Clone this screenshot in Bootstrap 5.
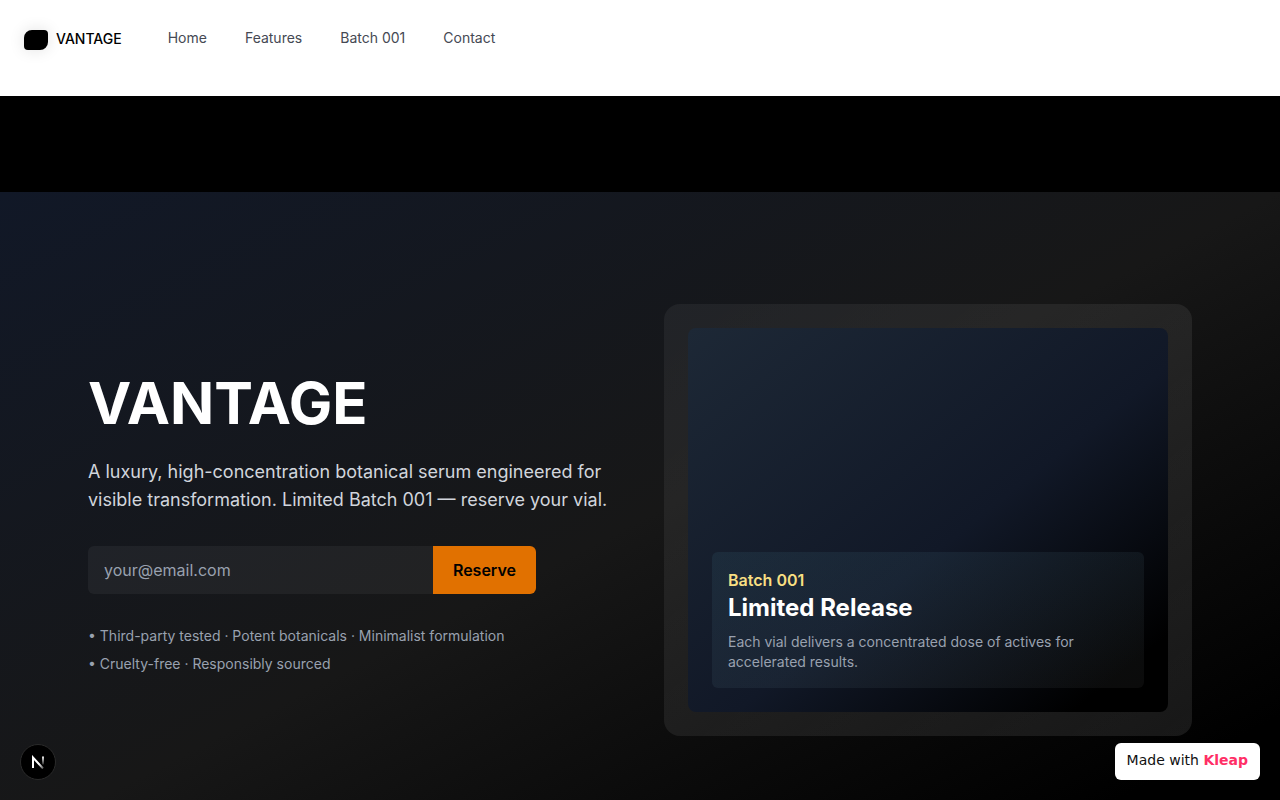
<!DOCTYPE html>
<html lang="en">
<head>
<meta charset="utf-8">
<meta name="viewport" content="width=device-width, initial-scale=1">
<title>VANTAGE</title>
<link href="https://cdn.jsdelivr.net/npm/bootstrap@5.3.0/dist/css/bootstrap.min.css" rel="stylesheet">
<style>
  body { font-family: Inter, "Liberation Sans", sans-serif; background: #000; color: #fff; }
  .site-nav { min-height: 96px; padding: 16px 24px; }
  .site-brand { font-size: 14px; line-height: 20px; font-weight: 500; color: #000; margin-right: 46px; padding-top: 13px; }
  .brand-mark { width: 24px; height: 20px; margin-top: 1px; background: #000; border-radius: 8px 4px 8px 4px; box-shadow: 0 0 16px rgba(0,0,0,.12); }
  .site-links { gap: 38px; padding-top: 12px; }
  .site-links a { font-size: 14px; line-height: 20px; color: #454953; }
  .hero { margin-top: 96px; padding: 112px 24px; background: linear-gradient(to bottom right, #111827, #171717 50%, #000 90%); }
  .hero-inner { max-width: 1104px; }
  .hero-grid { display: grid; grid-template-columns: 1fr 1fr; gap: 48px; align-items: center; }
  .hero-copy { padding-top: 6px; }
  .hero-title { font-size: 58px; line-height: 62px; font-weight: 700; margin-bottom: 24px; }
  .hero-lead { font-size: 18px; line-height: 28px; color: #d1d5dc; margin-bottom: 32px; }
  .reserve { max-width: 448px; margin-bottom: 32px; }
  .reserve .form-control, .reserve .btn { height: 48px; border: 0; border-radius: 6px; font-size: 16px; }
  .reserve .form-control { background: rgba(255,255,255,.05); color: #fff; padding: 0 16px; }
  .reserve .form-control::placeholder { color: #99a1af; opacity: 1; }
  .reserve .btn { background: #e17100; color: #000; font-weight: 600; padding: 0 20px; }
  .hero-points { font-size: 14px; line-height: 20px; color: #99a1af; gap: 8px; }
  .frame { padding: 24px; border-radius: 16px; background: linear-gradient(to bottom right, rgba(255,255,255,.05), rgba(255,255,255,.09)); }
  .vial { min-height: 384px; padding: 24px; border-radius: 8px; background: linear-gradient(to bottom right, #1d2836, #111827 55%, #000 90%); }
  .glass { padding: 16px; border-radius: 6px; background: linear-gradient(to bottom right, rgba(60,110,130,.16), rgba(255,255,255,.045)); }
  .glass-kicker { font-size: 16px; line-height: 24px; font-weight: 600; color: #f8df82; }
  .glass-title { font-size: 24px; line-height: 32px; font-weight: 700; margin-bottom: 8px; }
  .glass-text { font-size: 14px; line-height: 20px; color: #99a1af; }
  .dev-button { left: 20px; bottom: 20px; width: 36px; height: 36px; background: #000; border: 1px solid #2b2b2b; }
  .made-with { right: 20px; bottom: 20px; padding: 7px 12px 9px; border-radius: 6px; background: #fff; color: #111; font: 14px/21px "DejaVu Sans", sans-serif; }
  .made-with strong { color: #ff2f66; }
  @media (max-width: 800px) {
    .hero-grid { grid-template-columns: 1fr; }
    .site-nav { flex-wrap: wrap; }
  }
</style>
</head>
<body>
<header>
  <nav class="site-nav bg-white d-flex align-items-start" aria-label="Main">
    <a class="site-brand d-flex gap-2 text-decoration-none" href="#"><span class="brand-mark"></span>VANTAGE</a>
    <div class="site-links d-flex flex-wrap">
      <a class="text-decoration-none" href="#">Home</a>
      <a class="text-decoration-none" href="#features">Features</a>
      <a class="text-decoration-none" href="#batch">Batch 001</a>
      <a class="text-decoration-none" href="#contact">Contact</a>
    </div>
  </nav>
</header>
<main>
  <section class="hero">
    <div class="hero-inner hero-grid mx-auto">
      <div class="hero-copy">
        <h1 class="hero-title">VANTAGE</h1>
        <p class="hero-lead">A luxury, high-concentration botanical serum engineered for visible transformation. Limited Batch 001 — reserve your vial.</p>
        <form class="reserve input-group">
          <input class="form-control" type="email" placeholder="your@email.com" aria-label="Email address">
          <button class="btn" type="button">Reserve</button>
        </form>
        <ul class="hero-points list-unstyled d-flex flex-column mb-0">
          <li>• Third-party tested · Potent botanicals · Minimalist formulation</li>
          <li>• Cruelty-free · Responsibly sourced</li>
        </ul>
      </div>
      <div class="frame" id="batch">
        <div class="vial d-flex flex-column justify-content-end">
          <div class="glass">
            <div class="glass-kicker">Batch 001</div>
            <h2 class="glass-title">Limited Release</h2>
            <p class="glass-text mb-0">Each vial delivers a concentrated dose of actives for accelerated results.</p>
          </div>
        </div>
      </div>
    </div>
  </section>
</main>
<button class="dev-button position-fixed rounded-circle d-flex align-items-center justify-content-center p-0" type="button" aria-label="Developer tools">
  <svg width="14" height="14" viewBox="0 0 14 14" fill="none" aria-hidden="true">
    <defs>
      <linearGradient id="stem" x1="0" y1="1" x2="0" y2="11" gradientUnits="userSpaceOnUse"><stop stop-color="#fff"/><stop offset="1" stop-color="#fff" stop-opacity="0"/></linearGradient>
      <linearGradient id="diag" x1="8" y1="9" x2="12" y2="14" gradientUnits="userSpaceOnUse"><stop stop-color="#fff"/><stop offset="1" stop-color="#fff" stop-opacity=".3"/></linearGradient>
    </defs>
    <path d="M2 13V2.500L12 13.500" stroke="url(#diag)" stroke-width="2"/>
    <path d="M12 1.500V9.500" stroke="url(#stem)" stroke-width="2"/>
  </svg>
</button>
<a class="made-with position-fixed text-decoration-none" href="#">Made with <strong>Kleap</strong></a>
<script src="https://cdn.jsdelivr.net/npm/bootstrap@5.3.0/dist/js/bootstrap.bundle.min.js"></script>
</body>
</html>
